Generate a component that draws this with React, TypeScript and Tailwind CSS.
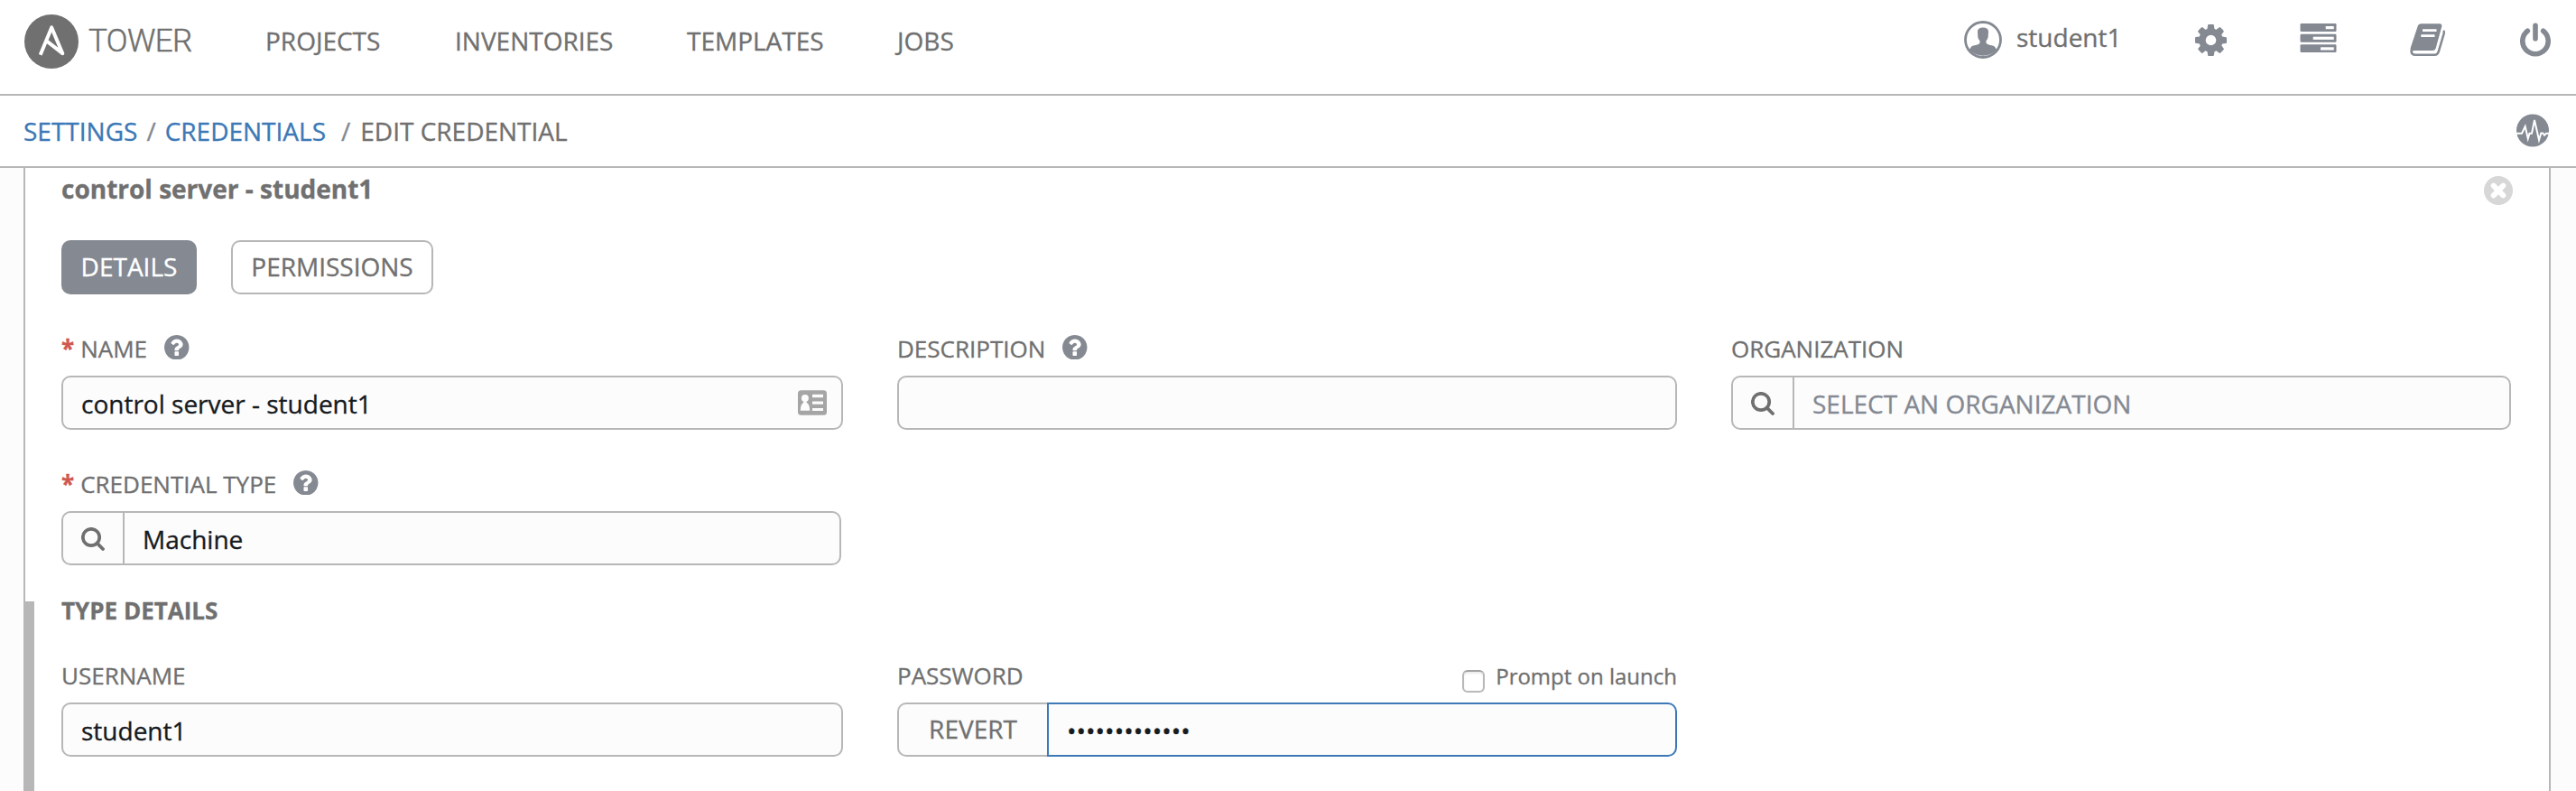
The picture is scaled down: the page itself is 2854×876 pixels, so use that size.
import React from "react";

const HelpIcon = () => (
  <svg viewBox="128 128 1536 1536" className="mb-[3px] ml-[19px] h-[27.5px] w-[27.5px] shrink-0 fill-[#848992]">
    <path d="M1024 1376v-192q0-14-9-23t-23-9h-192q-14 0-23 9t-9 23v192q0 14 9 23t23 9h192q14 0 23-9t9-23zm256-672q0-88-55.5-163t-138.5-116-170-41q-243 0-371 213-15 24 8 42l132 100q7 6 19 6 16 0 25-12 53-68 86-92 34-24 86-24 48 0 85.5 26t37.5 59q0 38-20 61t-68 45q-63 28-115.5 86.5t-52.5 125.5v36q0 14 9 23t23 9h192q14 0 23-9t9-23q0-19 21.5-49.5t54.5-49.5q32-18 49-28.5t46-35 44.5-48 28-60.5 12.5-81zm384 192q0 209-103 385.5t-279.5 279.5-385.5 103-385.5-103-279.5-279.5-103-385.5 103-385.5 279.5-279.5 385.5-103 385.5 103 279.5 279.5 103 385.5z" />
  </svg>
);

const SearchIcon = () => (
  <svg viewBox="0 0 26 26" className="h-[26px] w-[26px]" fill="none" stroke="#707070">
    <circle cx="11" cy="11" r="9.2" strokeWidth="3.7" />
    <path d="M17.6 17.6l6.4 6.4" strokeWidth="3.8" strokeLinecap="round" />
  </svg>
);

const LogoIcon = () => (
  <svg viewBox="0 0 60 60" className="mt-4 h-[60px] w-[60px] shrink-0">
    <circle cx="30" cy="30" r="30" fill="#707070" />
    <path
      d="M17.7 44.7L30.2 14.4L42.3 43.2L25 29.7"
      fill="none"
      stroke="#fff"
      strokeWidth="4"
      strokeLinejoin="round"
    />
    <circle cx="42.2" cy="43" r="2" fill="#fff" />
  </svg>
);

const UserIcon = () => (
  <svg viewBox="0 0 42 42" className="h-[42px] w-[42px]">
    <circle cx="21" cy="21" r="19.5" fill="#fff" stroke="#848992" strokeWidth="2.8" />
    <path
      d="M15 12c0-3 2-4.500 6-4.500s6 1.500 6 4.500l-.3 5.500c-.2 2-1.200 3.500-2.200 4.500v2.500c1 2 4 2.500 7 3c2.500.4 3.500 2.500 4.500 4.500a20 20 0 0 1-30 0c1-2 2-4.100 4.500-4.500c3-.5 6-1 7-3v-2.500c-1-1-2-2.500-2.200-4.500z"
      fill="#848992"
    />
  </svg>
);

const CogIcon = () => (
  <svg viewBox="128 128 1536 1536" className="h-[35px] w-[35px] fill-[#848992]">
    <path d="M1152 896q0-106-75-181t-181-75-181 75-75 181 75 181 181 75 181-75 75-181zm512-109v222q0 12-8 23t-20 13l-185 28q-19 54-39 91 35 50 107 138 10 12 10 25t-9 23q-27 37-99 108t-94 71q-12 0-26-9l-138-108q-44 23-91 38-16 136-29 186-7 28-36 28h-222q-14 0-24.5-8.5t-11.5-21.5l-28-184q-49-16-90-37l-141 107q-10 9-25 9-14 0-25-11-126-114-165-168-7-10-7-23 0-12 8-23 15-21 51-66.5t54-70.5q-27-50-41-99l-183-27q-13-2-21-12.5t-8-23.5v-222q0-12 8-23t19-13l186-28q14-46 39-92-40-57-107-138-10-12-10-24 0-10 9-23 26-36 98.5-107.5t94.5-71.5q13 0 26 10l138 107q44-23 91-38 16-136 29-186 7-28 36-28h222q14 0 24.5 8.5t11.5 21.5l28 184q49 16 90 37l142-107q9-9 24-9 13 0 25 10 129 119 165 170 7 8 7 22 0 12-8 23-15 21-51 66.5t-54 70.5q26 50 41 98l183 28q13 2 21 12.5t8 23.5z" />
  </svg>
);

const ServerIcon = () => (
  <svg viewBox="0 0 41 32" className="h-8 w-[41px]">
    <g fill="#848992">
      <rect x="0.5" width="40" height="9" rx="1.3" />
      <rect x="0.5" y="11.7" width="40" height="9" rx="1.3" />
      <rect x="0.5" y="23.3" width="40" height="8.7" rx="1.3" />
    </g>
    <g fill="#fff">
      <rect x="28.7" y="3" width="9" height="3.2" />
      <rect x="14.7" y="14.7" width="23" height="3.2" />
      <rect x="23" y="26.3" width="14.7" height="3.2" />
    </g>
  </svg>
);

const BookIcon = () => (
  <svg viewBox="0 0 40 37" className="h-[37px] w-10">
    <path
      d="M12.5.3H33Q36 .3 35.2 3.500L28.800 27Q28 30 25 30H5Q2.500 30 1.500 31.500Q-.2 29.500 1 26L8.500 3.500Q9.500.3 12.500.3Z"
      fill="#848992"
    />
    <path
      d="M37 8Q38.200 9 37.700 11L31.800 31Q30.800 34.800 27.500 34.800H6Q1.600 34.800 1.500 30"
      fill="none"
      stroke="#848992"
      strokeWidth="2.6"
    />
    <path d="M14 7.700H29.500M12.300 13.700H27.500" stroke="#fff" strokeWidth="2.8" />
  </svg>
);

const PowerIcon = () => (
  <svg viewBox="0 0 34 38" className="h-[38px] w-[34px]" fill="none" stroke="#848992" strokeWidth="5.6" strokeLinecap="round">
    <path d="M8.300 9.300A14.200 14.200 0 1 0 25.700 9.300" />
    <path d="M17 3.200V17.800" />
  </svg>
);

const ActivityIcon = () => (
  <svg viewBox="0 0 36 37" className="h-[37px] w-9">
    <circle cx="18" cy="18.5" r="18" fill="#848992" />
    <path
      d="M0 21.800H6L9.700 14L12.800 27.500L14.500 21.800H17L20 7L25 29L27.300 21.500L29.300 21.500L31 23.800L33 21.800H36"
      fill="none"
      stroke="#fff"
      strokeWidth="2"
    />
  </svg>
);

const CloseIcon = () => (
  <svg viewBox="0 0 32 32" className="mt-[9px] -mr-0.5 h-8 w-8">
    <circle cx="16" cy="16" r="16" fill="#d7d7d7" />
    <path d="M10.700 10.700L21.300 21.300M21.300 10.700L10.700 21.300" stroke="#fff" strokeWidth="6" strokeLinecap="round" />
  </svg>
);

const ContactIcon = () => (
  <svg viewBox="0 0 32 28" className="mb-[3px] h-7 w-8">
    <rect y="0.3" width="32" height="27.4" rx="3.5" fill="#a5a5a5" />
    <g fill="#fcfcfc">
      <circle cx="7.9" cy="9" r="4" />
      <path d="M2.700 22.800Q3 15.500 6.300 13.800V12H9.500V13.800Q13 15.500 13.300 22.800Z" />
      <rect x="16" y="4.8" width="12" height="3.4" />
      <rect x="16" y="12.5" width="12" height="3.2" />
      <rect x="16" y="20" width="12" height="3" />
    </g>
  </svg>
);

interface LabelProps {
  text: string;
  required?: boolean;
  help?: boolean;
}

const Label = ({ text, required, help }: LabelProps) => (
  <div className="mb-3 flex h-9 items-center text-[26px] leading-9">
    {required && <span className="mr-[7px] font-bold text-[#d0584f]">*</span>}
    <span>{text}</span>
    {help && <HelpIcon />}
  </div>
);

const TextBox = ({ value, children }: { value?: string; children?: React.ReactNode }) => (
  <div className="flex h-[60px] items-center justify-between rounded-[10px] border-2 border-[#b7b7b7] bg-[#fcfcfc] pt-0.5 pr-4 pl-5 text-[#161b1f]">
    <span>{value}</span>
    {children}
  </div>
);

const Lookup = ({ value, placeholder }: { value?: string; placeholder?: string }) => (
  <div className="flex h-[60px] rounded-[10px] border-2 border-[#b7b7b7] bg-[#fcfcfc]">
    <div className="flex w-[68px] items-center border-r-2 border-[#b7b7b7] pt-0.5 pl-5">
      <SearchIcon />
    </div>
    <div className="flex items-center pt-0.5 pl-5">
      {value && <span className="text-[#161b1f]">{value}</span>}
      {placeholder && <span className="text-[#848992]">{placeholder}</span>}
    </div>
  </div>
);

export default function App() {
  return (
    <div className="flex h-[876px] w-[2854px] flex-col overflow-hidden bg-[#fcfcfc] font-['Open_Sans',sans-serif] text-[28px] text-[#707070] [-webkit-text-stroke:0.35px]">
      <header className="flex h-[106px] shrink-0 items-start justify-between border-b-2 border-[#b7b7b7] bg-white pr-7 pl-[27px]">
        <div className="flex items-start">
          <LogoIcon />
          <span className="ml-[11px] w-[196px] font-['Roboto',sans-serif] text-[35px] leading-[92px] font-light tracking-[-0.6px] [-webkit-text-stroke:0.5px]">
            TOWER
          </span>
          <nav className="flex leading-[90px]">
            <a className="w-[210px]">PROJECTS</a>
            <a className="w-[257px]">INVENTORIES</a>
            <a className="w-[233px]">TEMPLATES</a>
            <a>JOBS</a>
          </nav>
        </div>
        <div className="flex h-[88px] items-center">
          <UserIcon />
          <span className="ml-4 w-[198px] pb-1.5 leading-9">student1</span>
          <CogIcon />
          <div className="mr-[81px] ml-[81px] pb-1">
            <ServerIcon />
          </div>
          <BookIcon />
          <div className="ml-[82px]">
            <PowerIcon />
          </div>
        </div>
      </header>

      <div className="flex h-20 shrink-0 items-center justify-between border-b-2 border-[#b7b7b7] bg-white pr-[30px] pl-[26px]">
        <div className="flex">
          <a className="text-[#3c79b6]">SETTINGS</a>
          <span className="mx-2.5 text-[#848992]">/</span>
          <a className="text-[#3c79b6]">CREDENTIALS</a>
          <span className="mr-[11px] ml-[17px] text-[#848992]">/</span>
          <span>EDIT CREDENTIAL</span>
        </div>
        <div className="pb-px">
          <ActivityIcon />
        </div>
      </div>

      <main className="mr-7 ml-[26px] flex-1 border-x-2 border-[#b7b7b7] bg-white pr-[42px] pl-10">
        <div className="flex h-20 items-start justify-between">
          <h1 className="leading-[46px] font-bold">control server - student1</h1>
          <CloseIcon />
        </div>

        <div className="flex gap-[38px]">
          <button className="flex h-[60px] w-[150px] items-center justify-center rounded-[10px] bg-[#848992] pb-0.5 text-white">
            DETAILS
          </button>
          <button className="flex h-[60px] w-[224px] items-center justify-center rounded-[10px] border-2 border-[#b7b7b7] bg-white pb-0.5">
            PERMISSIONS
          </button>
        </div>

        <div className="mt-[42px] grid grid-cols-[866px_864px_864px] gap-x-[60px] gap-y-[42px]">
          <div>
            <Label text="NAME" required help />
            <TextBox value="control server - student1">
              <ContactIcon />
            </TextBox>
          </div>
          <div>
            <Label text="DESCRIPTION" help />
            <TextBox />
          </div>
          <div>
            <Label text="ORGANIZATION" />
            <Lookup placeholder="SELECT AN ORGANIZATION" />
          </div>
          <div className="pr-0.5">
            <Label text="CREDENTIAL TYPE" required help />
            <Lookup value="Machine" />
          </div>
        </div>

        <section className="mt-10 -ml-10 h-[210px] border-l-10 border-[#b7b7b7] pl-[30px]">
          <h2 className="mb-11 text-[26px] leading-5 font-bold">TYPE DETAILS</h2>
          <div className="grid grid-cols-[866px_864px_864px] gap-x-[60px]">
            <div>
              <Label text="USERNAME" />
              <TextBox value="student1" />
            </div>
            <div>
              <div className="flex justify-between">
                <Label text="PASSWORD" />
                <div className="flex h-9 items-start text-[24px] leading-[37px]">
                  <span className="mt-[12px] mr-3 h-[25px] w-[25px] rounded-[6px] border-2 border-[#b9b9b9] border-t-[#a3a3a3] bg-white shadow-[inset_0_2px_2px_#ececec]" />
                  <span>Prompt on launch</span>
                </div>
              </div>
              <div className="flex h-[60px]">
                <button className="flex w-[166px] items-center justify-center rounded-l-[10px] border-2 border-r-0 border-[#b7b7b7] bg-[#fcfcfc] pb-0.5">
                  REVERT
                </button>
                <div className="flex flex-1 items-center rounded-r-[10px] border-2 border-[#3c79b6] bg-[#fcfcfc] pt-0.5 pl-5 text-[#161b1f]">
                  •••••••••••••
                </div>
              </div>
            </div>
          </div>
        </section>
      </main>
    </div>
  );
}
